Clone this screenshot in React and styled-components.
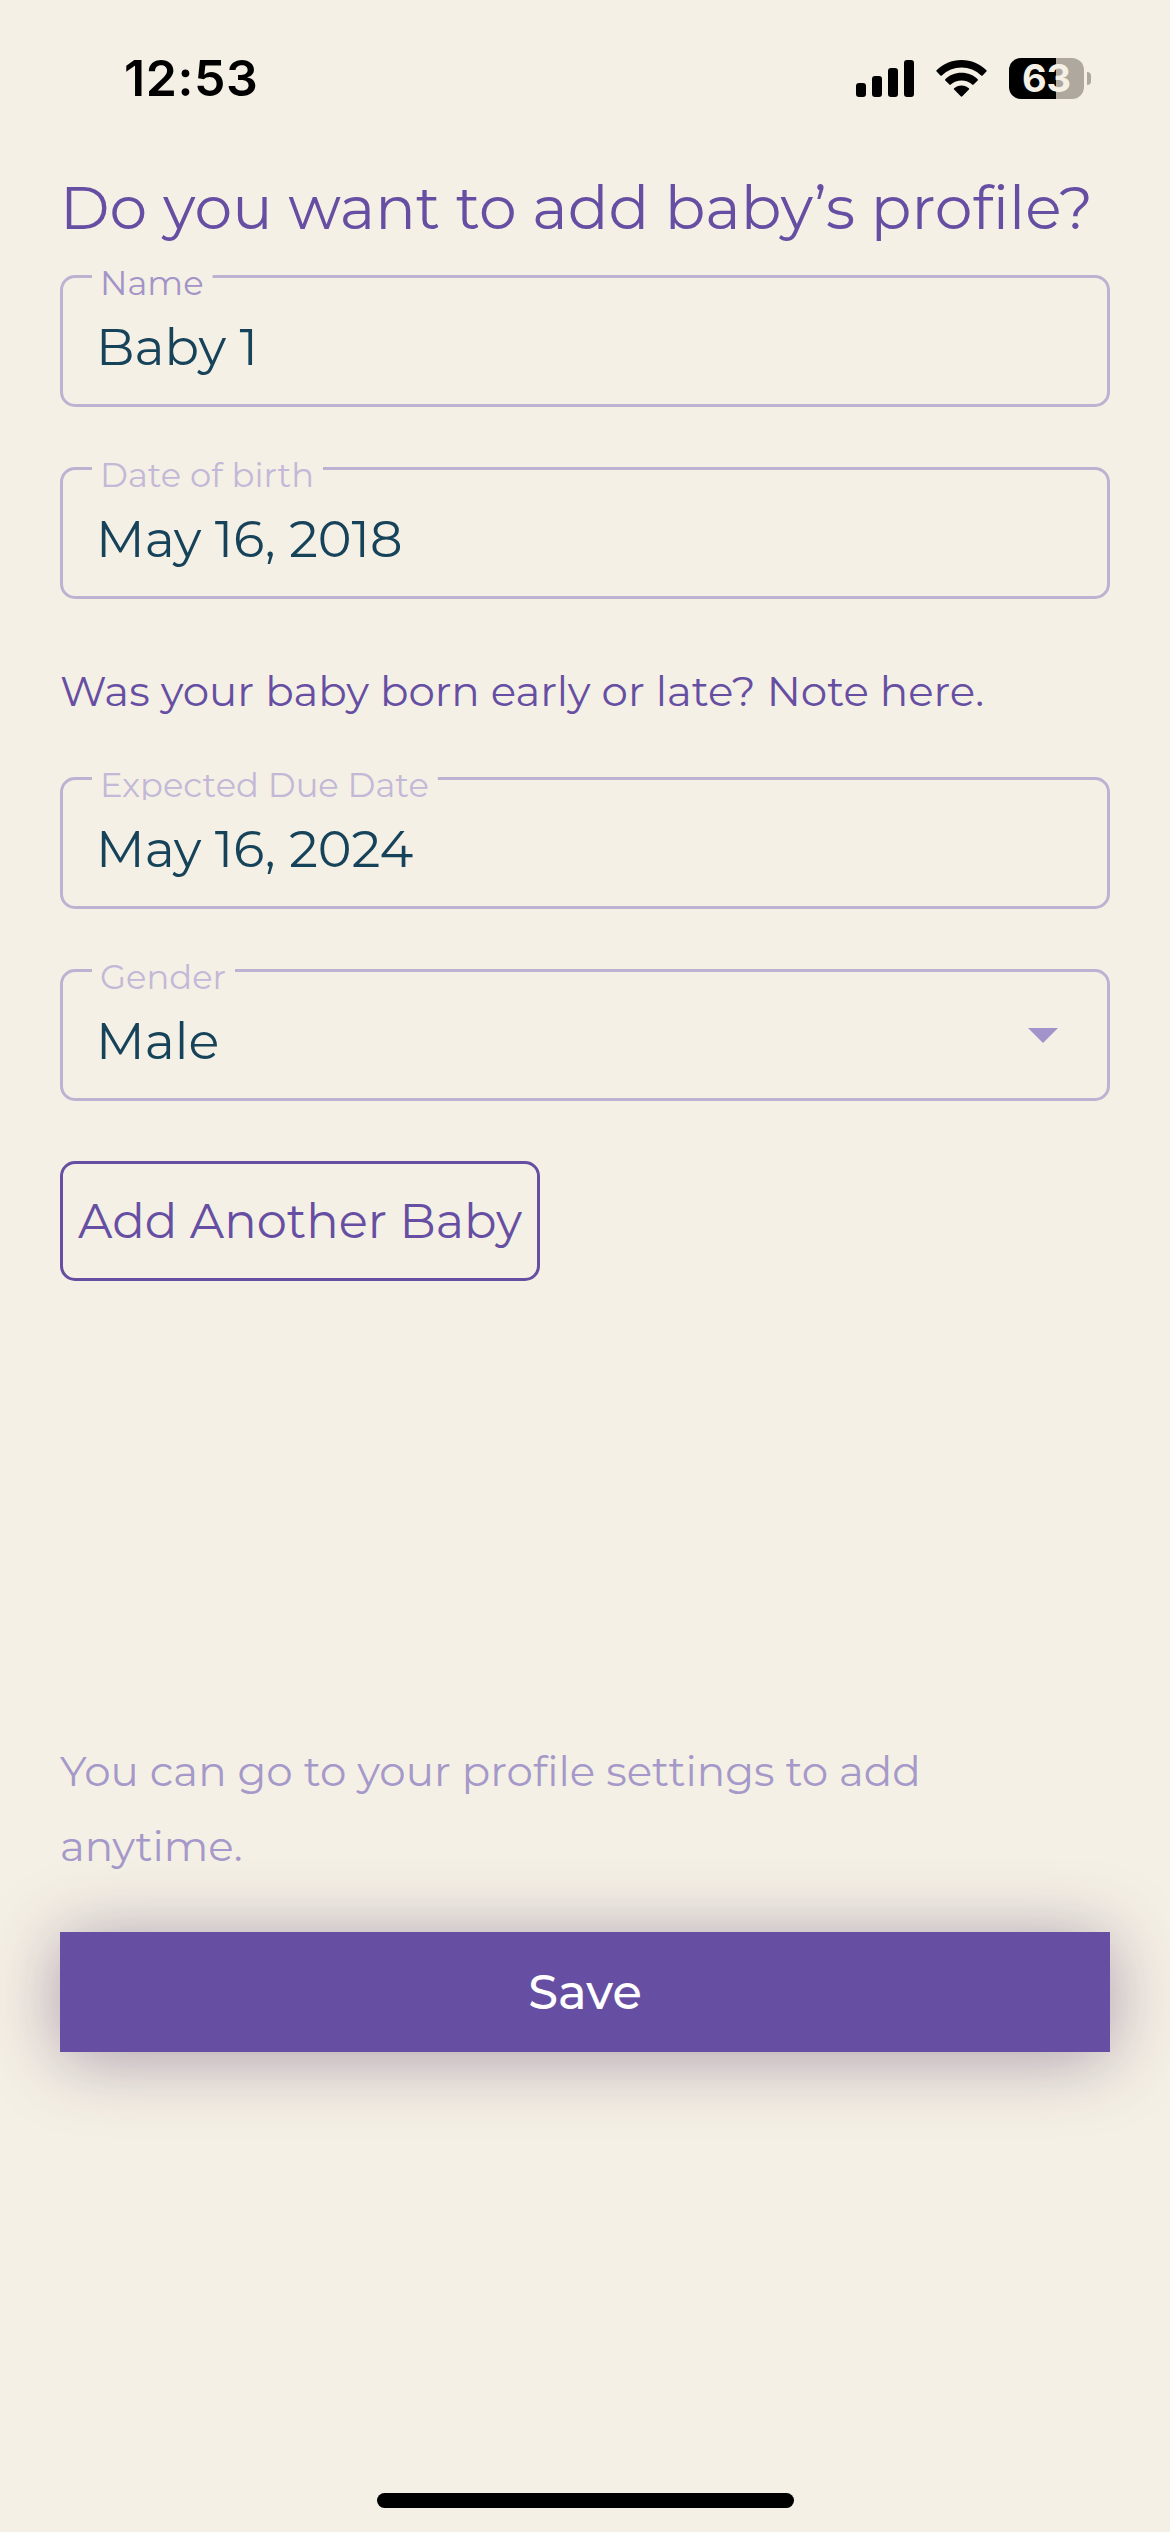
import styled, { createGlobalStyle } from "styled-components"

const GlobalStyle = createGlobalStyle `
  * {
    box-sizing: border-box;
  }

  body{
    margin: 0;
    background-color: #f5f0e5;
    font-family: Montserrat, Inter, sans-serif;
  }
`

const StyledScreen = styled.div `
  width: 1170px;
  height: 2532px;
  display: flex;
  flex-direction: column;
  overflow: hidden;
  background-color: #f5f0e5;
`

// status bar
const StyledStatusBar = styled.header `
  height: 171px;
  padding: 47px 79px 0 124px;
  display: flex;
  justify-content: space-between;
  align-items: flex-start;
  flex-shrink: 0;
`

const StyledTime = styled.span `
  font: 600 50px/62px Inter, sans-serif;
  letter-spacing: .6px;
  color: #000;
`

const StyledStatusIcons = styled.div `
  height: 62px;
  display: flex;
  align-items: center;
  gap: 22px;
`

const StyledBattery = styled.div `
  display: flex;
  align-items: center;
  gap: 3px;
`

const StyledBatteryBody = styled.div `
  width: 75px;
  height: 41px;
  border-radius: 12px;
  background: linear-gradient(to right, #000 ${props => props.$level}%, #aea89f ${props => props.$level}%);
  font: 700 38px/41px Inter, sans-serif;
  text-align: center;
  color: #f5f0e5;
`

const StyledBatteryTip = styled.div `
  width: 4px;
  height: 13px;
  border-radius: 0 4px 4px 0;
  background-color: #aea89f;
`

const SignalIcon = () => (
  <svg width="58" height="37" viewBox="0 0 58 37">
    <rect x="0" y="23" width="10" height="14" rx="3" />
    <rect x="16" y="16" width="10" height="21" rx="3" />
    <rect x="32" y="8" width="10" height="29" rx="3" />
    <rect x="48" y="0" width="10" height="37" rx="3" />
  </svg>
)

const WifiIcon = () => (
  <svg width="51" height="37" viewBox="0 0 51 37">
    <path d="M25.5 0C35.3 0 44 3.9 50.4 10.2Q51 10.9 50.4 11.6L46.6 15.4Q45.9 16 45.2 15.4A28.4 28.4 0 0 0 5.8 15.4Q5.1 16 4.4 15.4L.6 11.6Q0 10.9 .6 10.2C7 3.9 15.7 0 25.5 0Z" />
    <path d="M25.5 12.8C31.9 12.8 37.6 15.2 41.7 19.2Q42.4 19.9 41.7 20.6L37.6 24.6Q36.9 25.2 36.2 24.6A15.8 15.8 0 0 0 14.8 24.6Q14.1 25.2 13.4 24.6L9.3 20.6Q8.6 19.9 9.3 19.2C13.4 15.2 19.1 12.8 25.5 12.8Z" />
    <path d="M25.5 25.4C28.4 25.4 31 26.5 32.9 28.2Q33.6 28.9 32.9 29.6L26.3 36.3Q25.5 37 24.7 36.3L18.1 29.6Q17.4 28.9 18.1 28.2C20 26.5 22.6 25.4 25.5 25.4Z" />
  </svg>
)

// form
const StyledForm = styled.main `
  flex: 1;
  padding: 0 60px;
  display: flex;
  flex-direction: column;
`

const StyledTitle = styled.h1 `
  margin: 0 0 30px;
  font-size: 60px;
  line-height: 74px;
  font-weight: 400;
  white-space: nowrap;
  color: #664fa3;
`

const StyledFieldGroup = styled.div `
  display: flex;
  flex-direction: column;
  gap: 60px;
`

const StyledField = styled.div `
  position: relative;
  height: 132px;
  padding: 11px 49px 0 33px;
  border: 3px solid #beb2d3;
  border-radius: 15px;
  display: flex;
  justify-content: space-between;
  align-items: center;
`

// sits on the top border and cuts it open
const StyledLabel = styled.label `
  position: absolute;
  top: -15px;
  left: 29px;
  height: 35px;
  padding: 0 9px 0 8px;
  clip-path: inset(0);
  background-color: #f5f0e5;
  font-size: 33.75px;
  line-height: 40px;
  white-space: nowrap;
  color: ${props => props.$active? '#a294c8': '#c3b8d7'};
`

const StyledValue = styled.span `
  font-size: 51px;
  line-height: 62px;
  color: #17435a;
`

const StyledCaret = styled.svg `
  margin-top: -11px;
  fill: #a294cb;
`

// props: label, value, active, select
const Field = ({label, value, active, select}) => {
  return (
    <StyledField>
      <StyledLabel $active={active}>{label}</StyledLabel>
      <StyledValue>{value}</StyledValue>
      {select && (
        <StyledCaret width="30" height="15" viewBox="0 0 30 15">
          <path d="M0 0H30L15 15Z" />
        </StyledCaret>
      )}
    </StyledField>
  )
}

const StyledQuestion = styled.p `
  margin: 67px 0 60px;
  font-size: 42px;
  line-height: 51px;
  color: #664fa3;
`

const StyledAddButton = styled.button `
  width: 480px;
  height: 120px;
  margin-top: 60px;
  padding: 0;
  border: 3px solid #664fa3;
  border-radius: 15px;
  background: none;
  font: 400 48px Montserrat, sans-serif;
  white-space: nowrap;
  color: #664fa3;
`

// bottom part
const StyledHint = styled.p `
  width: 960px;
  margin: 453px 0 48px;
  font-size: 42px;
  line-height: 75px;
  color: #a599ca;
`

const StyledSaveButton = styled.button `
  height: 120px;
  border: none;
  background-color: #664fa3;
  box-shadow: 0 6px 72px rgba(55, 30, 85, .4);
  font: 500 48px Montserrat, sans-serif;
  color: #fff;
`

const StyledHomeIndicator = styled.div `
  width: 417px;
  height: 15px;
  margin: 0 auto 24px;
  border-radius: 8px;
  background-color: #000;
`

const App = () => {
  return (
    <StyledScreen>
      <GlobalStyle />
      <StyledStatusBar>
        <StyledTime>12:53</StyledTime>
        <StyledStatusIcons>
          <SignalIcon />
          <WifiIcon />
          <StyledBattery>
            <StyledBatteryBody $level={63}>63</StyledBatteryBody>
            <StyledBatteryTip />
          </StyledBattery>
        </StyledStatusIcons>
      </StyledStatusBar>
      <StyledForm>
        <StyledTitle>Do you want to add baby’s profile?</StyledTitle>
        <StyledFieldGroup>
          <Field label='Name' value='Baby 1' active />
          <Field label='Date of birth' value='May 16, 2018' />
        </StyledFieldGroup>
        <StyledQuestion>Was your baby born early or late? Note here.</StyledQuestion>
        <StyledFieldGroup>
          <Field label='Expected Due Date' value='May 16, 2024' />
          <Field label='Gender' value='Male' select />
        </StyledFieldGroup>
        <StyledAddButton>Add Another Baby</StyledAddButton>
        <StyledHint>You can go to your profile settings to add anytime.</StyledHint>
        <StyledSaveButton>Save</StyledSaveButton>
      </StyledForm>
      <StyledHomeIndicator />
    </StyledScreen>
  )
}

export default App
